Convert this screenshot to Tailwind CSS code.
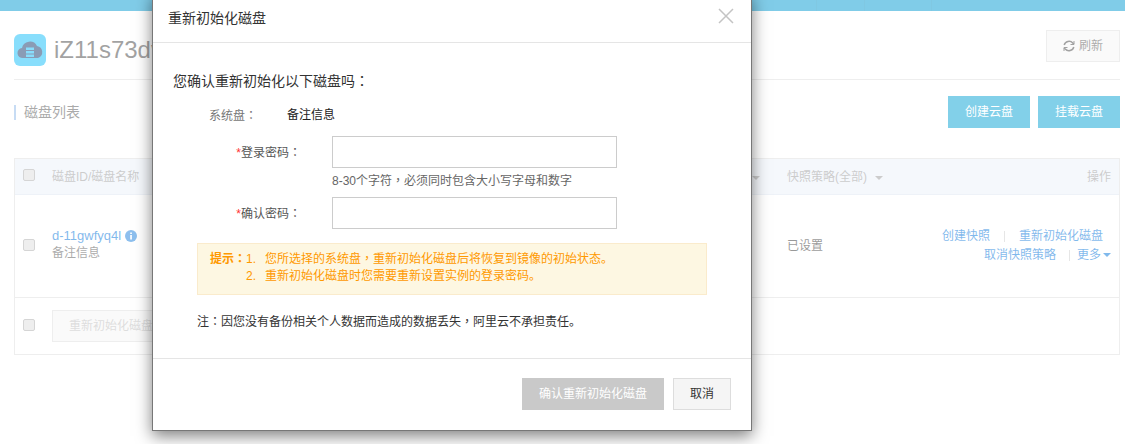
<!DOCTYPE html>
<html lang="zh-CN">
<head>
  <meta charset="UTF-8">
  <title>磁盘列表</title>
  <script src="https://cdn.jsdelivr.net/npm/@tailwindcss/browser@4"></script>
</head>
<body class="relative h-[444px] overflow-hidden bg-white font-['Liberation_Sans','Noto_Sans_CJK_SC',sans-serif] text-xs text-[#333]">

  <!-- top bar -->
  <div class="flex h-[11px] bg-[#0099d1]">
    <div class="ml-auto h-full w-[49px] border-x border-[#0090c4]"></div>
    <div class="h-full w-[67px] border-r border-[#0090c4]"></div>
    <div class="w-[193px]"></div>
  </div>

  <!-- page -->
  <div class="pl-[14px] pr-[5px]">
    <div class="flex h-[69px] items-start justify-between border-b border-[#ddd]">
      <div class="mt-[23px] flex items-center gap-2">
        <svg class="h-8 w-8" viewBox="0 0 32 32">
          <rect width="32" height="32" rx="6" fill="#10bdf9"/>
          <path d="M9 24a5 5 0 0 1-1-10 8 8 0 0 1 15-2 6.200 6.200 0 0 1 1 12z" fill="#15396b"/>
          <path d="M12 13.500h8v2.500h-8zM12 17h8v2.500h-8zM12 20.500h8v2.500h-8z" fill="#10bdf9"/>
        </svg>
        <span class="text-2xl text-[#444]">iZ11s73dv</span>
      </div>
      <button class="mt-[19px] flex h-8 w-[74px] items-center justify-center gap-1 border border-[#ddd] bg-[#f5f5f5] text-[#555]">
        <svg class="h-3 w-3" viewBox="0 0 12 12" fill="none" stroke="#444" stroke-width="1.500">
          <path d="M1.200 5a5 5 0 0 1 8.600-2l1 1.200M10.800 7a5 5 0 0 1-8.600 2l-1-1.200"/>
          <path d="M11 1v3.500H7.500M1 11V7.500h3.500" stroke-width="1"/>
        </svg>
        刷新
      </button>
    </div>

    <div class="mt-4 flex h-8 items-center justify-between">
      <div class="flex h-[15px] items-center border-l-2 border-[#8fb8e8] pl-2 text-sm text-[#555]">磁盘列表</div>
      <div class="flex gap-2 text-white">
        <button class="h-8 w-[82px] bg-[#05a0d3]">创建云盘</button>
        <button class="h-8 w-[82px] bg-[#05a0d3]">挂载云盘</button>
      </div>
    </div>

    <div class="mt-[30px] border border-[#ddd]">
      <div class="flex h-[36px] items-center border-b border-[#dde5f0] bg-[#ebf1f9] text-[#999]">
        <span class="-mt-[3px] ml-2 h-3 w-3 rounded-[2px] border border-[#aaa] bg-[#ddd]"></span>
        <span class="ml-[17px] w-[700px] pt-px">磁盘ID/磁盘名称</span>
        <span class="mt-[2px] h-0 w-0 border-x-4 border-t-4 border-x-transparent border-t-[#999]"></span>
        <span class="ml-[27px] pt-px">快照策略(全部)</span>
        <span class="ml-[8px] mt-[2px] h-0 w-0 border-x-4 border-t-4 border-x-transparent border-t-[#999]"></span>
        <span class="ml-auto pr-2 pt-px">操作</span>
      </div>
      <div class="flex h-[103px] items-center border-b border-[#ddd]">
        <span class="-mt-[3px] ml-2 h-3 w-3 rounded-[2px] border border-[#aaa] bg-[#ddd]"></span>
        <div class="ml-[17px] w-[735px] pb-[4px] text-[#555]">
          <div class="flex items-center gap-1 text-[13px] text-[#0073d8]">
            d-11gwfyq4l
            <svg class="h-3 w-3" viewBox="0 0 12 12">
              <circle cx="6" cy="6" r="6" fill="#1b7fdc"/>
              <path d="M5.200 2.400h1.700v1.500H5.200zM5.200 5h1.700v4.600H5.200z" fill="#fff"/>
            </svg>
          </div>
          <div>备注信息</div>
        </div>
        <span class="text-[#333]">已设置</span>
        <div class="ml-auto flex flex-col items-end pb-px pr-2 text-[#0073d8]">
          <div class="flex items-center pr-[8px]">
            <span>创建快照</span>
            <span class="mx-[14px] h-[11px] border-l border-[#ccc]"></span>
            <span>重新初始化磁盘</span>
          </div>
          <div class="mt-[3px] flex items-center">
            <span>取消快照策略</span>
            <span class="ml-[13px] mr-[7px] h-[11px] border-l border-[#ccc]"></span>
            <span>更多</span>
            <span class="ml-[2px] h-0 w-0 border-x-4 border-t-4 border-x-transparent border-t-[#0073d8]"></span>
          </div>
        </div>
      </div>
      <div class="flex h-[56px] items-center">
        <span class="-mt-[3px] ml-2 h-3 w-3 rounded-[2px] border border-[#aaa] bg-[#ddd]"></span>
        <button class="ml-[17px] h-8 border border-[#ddd] bg-[#f5f5f5] px-4 text-[#bbb]">重新初始化磁盘</button>
      </div>
    </div>
  </div>

  <!-- backdrop -->
  <div class="absolute inset-0 bg-white/50"></div>

  <!-- dialog -->
  <div class="absolute -top-2 left-[152px] w-[600px] border border-[#777] bg-white shadow-[0_5px_15px_rgba(0,0,0,0.5)]">
    <div class="flex h-[50px] items-center justify-between border-b border-[#e5e5e5] pl-[15px] pr-[17px]">
      <span class="text-sm text-[#333]">重新初始化磁盘</span>
      <svg class="-mt-1 h-4 w-4" viewBox="0 0 16 16" stroke="#c4c4c4" stroke-width="1.500" fill="none">
        <path d="M1 1l14 14M15 1L1 15"/>
      </svg>
    </div>

    <div class="pl-5 pt-[27px]">
      <div class="text-sm leading-5">您确认重新初始化以下磁盘吗<span lang="zh-TW" class="font-['Noto_Sans_CJK_TC',sans-serif]">：</span></div>
      <div class="ml-9 mt-[14px] flex h-5 items-center">
        <span class="w-[78px] text-[#777]">系统盘<span lang="zh-TW" class="font-['Noto_Sans_CJK_TC',sans-serif]">：</span></span>
        <span class="text-[#222]">备注信息</span>
      </div>
      <div class="mt-[11px] flex items-center">
        <span class="w-[128px] text-right text-[#555]"><span class="text-[#f33]">*</span>登录密码<span lang="zh-TW" class="font-['Noto_Sans_CJK_TC',sans-serif]">：</span></span>
        <input type="text" class="ml-[31px] h-8 w-[285px] border border-[#ccc]">
      </div>
      <div class="ml-[159px] mt-[3px] h-[18px] leading-[18px] text-[#666]">8-30个字符<span lang="zh-TW" class="font-['Noto_Sans_CJK_TC',sans-serif]">，</span>必须同时包含大小写字母和数字</div>
      <div class="mt-[8px] flex items-center">
        <span class="w-[128px] text-right text-[#555]"><span class="text-[#f33]">*</span>确认密码<span lang="zh-TW" class="font-['Noto_Sans_CJK_TC',sans-serif]">：</span></span>
        <input type="text" class="ml-[31px] h-8 w-[285px] border border-[#ccc]">
      </div>
      <div class="ml-6 mt-[14px] flex h-[52px] w-[510px] items-start border border-[#faebcc] bg-[#fdf7e2] pl-[12px] pt-[5px] leading-[17px] text-[#f90]">
        <span class="font-bold">提示<span lang="zh-TW" class="font-['Noto_Sans_CJK_TC',sans-serif]">：</span></span>
        <ol>
          <li class="flex items-baseline"><span class="w-[19px]">1.</span><span>您所选择的系统盘<span lang="zh-TW" class="font-['Noto_Sans_CJK_TC',sans-serif]">，</span>重新初始化磁盘后将恢复到镜像的初始状态。</span></li>
          <li class="flex items-baseline"><span class="w-[19px]">2.</span><span>重新初始化磁盘时您需要重新设置实例的登录密码。</span></li>
        </ol>
      </div>
      <div class="ml-6 mt-[17px] h-[18px] leading-[18px] text-[#333]">注<span lang="zh-TW" class="font-['Noto_Sans_CJK_TC',sans-serif]">：</span>因您没有备份相关个人数据而造成的数据丢失<span lang="zh-TW" class="font-['Noto_Sans_CJK_TC',sans-serif]">，</span>阿里云不承担责任。</div>
    </div>

    <div class="mt-[28px] flex h-[72px] items-start justify-end gap-[9px] border-t border-[#e5e5e5] pr-[20px] pt-[19px]">
      <button class="h-8 w-[142px] bg-[#c9c9c9] text-white">确认重新初始化磁盘</button>
      <button class="h-8 w-[58px] border border-[#ddd] bg-[#f5f5f5] text-[#333]">取消</button>
    </div>
  </div>
</body>
</html>
